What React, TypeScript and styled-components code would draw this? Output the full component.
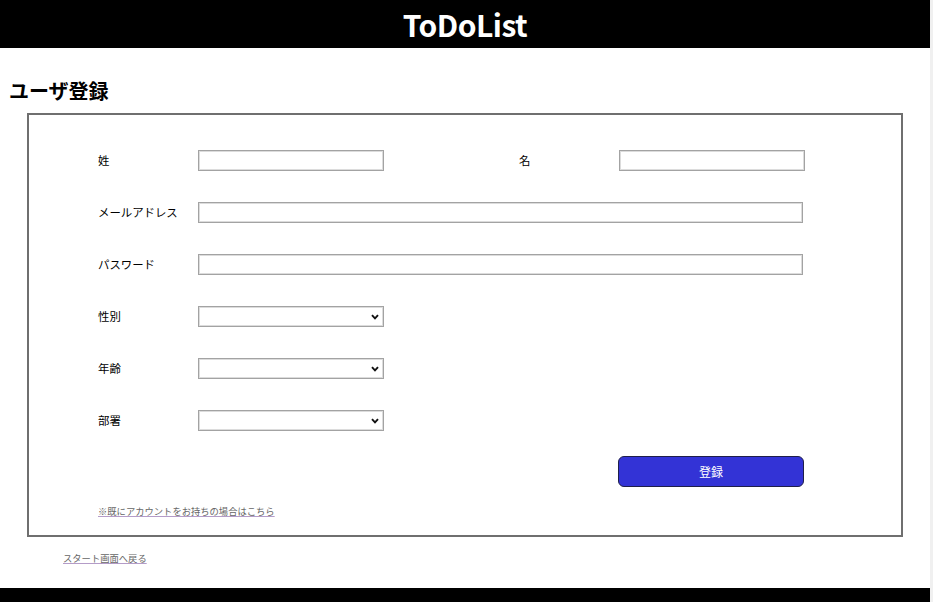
import React from 'react';
import styled, { createGlobalStyle } from 'styled-components';

const GlobalStyle = createGlobalStyle`
    html, body {
        margin: 0;
        padding: 0;
        background: #f0f0f0;
    }
    body {
        font-family: "Noto Sans CJK JP", "Noto Sans", sans-serif;
        color: #000;
    }
`;

const Page = styled.div`
    width: 930px;
    min-height: 100vh;
    background: #fff;
    display: flex;
    flex-direction: column;
`;

const Header = styled.header`
    height: 48px;
    background: #000;
    display: flex;
    align-items: center;
    justify-content: center;
    h1 {
        margin: 0;
        color: #fff;
        font-size: 30px;
        font-weight: 700;
        line-height: 1;
        letter-spacing: -0.5px;
    }
`;

const Main = styled.main`
    padding: 29px 9px 0;
    h2 {
        margin: 0 0 8px;
        font-size: 20px;
        font-weight: 700;
        line-height: 28px;
    }
`;

const FormBox = styled.form`
    margin: 0 18px;
    border: 2px solid #6f6f6f;
    padding: 35px 0 18px 69px;
    display: flex;
    flex-direction: column;
`;

const Row = styled.div`
    display: flex;
    align-items: center;
    height: 21px;
    margin-bottom: 31px;
`;

const Label = styled.label<{ $indent?: number }>`
    width: 100px;
    margin-left: ${p => p.$indent ?? 0}px;
    font-size: 11.4px;
    line-height: 1;
`;

const TextInput = styled.input<{ $w: number }>`
    display: block;
    box-sizing: border-box;
    width: ${p => p.$w}px;
    height: 21px;
    border: 1px solid #a3a3a3;
    box-shadow: inset 0 0 0 1px #dcdcdc;
    background: #fff;
    padding: 0 4px;
    font: inherit;
    font-size: 12px;
    outline: none;
`;

const SelectWrap = styled.div`
    position: relative;
    width: 186px;
    height: 21px;
    svg {
        position: absolute;
        right: 5px;
        top: 8px;
        pointer-events: none;
    }
`;

const Select = styled.select`
    display: block;
    appearance: none;
    box-sizing: border-box;
    width: 100%;
    height: 100%;
    margin: 0;
    border: 1px solid #a3a3a3;
    box-shadow: inset 0 0 0 1px #dcdcdc;
    border-radius: 0;
    background: #fff;
    font: inherit;
    font-size: 12px;
    padding: 0 4px;
    outline: none;
`;

const ButtonRow = styled.div`
    display: flex;
    margin: -6px 0 0 520px;
`;

const SubmitButton = styled.button`
    width: 186px;
    height: 31px;
    background: #3333d6;
    color: #fff;
    border: 1px solid #1f1f4a;
    border-radius: 6px;
    font-family: inherit;
    font-size: 12px;
    cursor: pointer;
`;

const SmallLink = styled.a`
    display: inline-block;
    font-size: 9.3px;
    line-height: 12px;
    color: #666;
    text-decoration: underline;
    text-decoration-color: #b49cc8;
`;

const LoginLink = styled(SmallLink)`
    margin-top: 18px;
    align-self: flex-start;
`;

const BackLink = styled(SmallLink)`
    margin: 15px 0 0 54px;
    align-self: flex-start;
`;

const Footer = styled.footer`
    margin-top: 21px;
    height: 48px;
    background: #000;
`;

const Chevron = () => (
    <svg width="8" height="6" viewBox="0 0 8 6">
        <path d="M1 1.2 L4 4.4 L7 1.2" fill="none" stroke="#111" strokeWidth="1.9" />
    </svg>
);

const SelectBox: React.FC<{ name: string }> = ({ name }) => (
    <SelectWrap>
        <Select name={name} defaultValue="">
            <option value=""></option>
        </Select>
        <Chevron />
    </SelectWrap>
);

const App: React.FC = () => {
    return (
        <>
            <GlobalStyle />
            <Page>
                <Header>
                    <h1>ToDoList</h1>
                </Header>
                <Main>
                    <h2>ユーザ登録</h2>
                    <FormBox onSubmit={e => e.preventDefault()}>
                        <Row>
                            <Label>姓</Label>
                            <TextInput $w={186} />
                            <Label $indent={135}>名</Label>
                            <TextInput $w={186} />
                        </Row>
                        <Row>
                            <Label>メールアドレス</Label>
                            <TextInput $w={605} />
                        </Row>
                        <Row>
                            <Label>パスワード</Label>
                            <TextInput $w={605} type="password" />
                        </Row>
                        <Row>
                            <Label>性別</Label>
                            <SelectBox name="gender" />
                        </Row>
                        <Row>
                            <Label>年齢</Label>
                            <SelectBox name="age" />
                        </Row>
                        <Row>
                            <Label>部署</Label>
                            <SelectBox name="department" />
                        </Row>
                        <ButtonRow>
                            <SubmitButton type="submit">登録</SubmitButton>
                        </ButtonRow>
                        <LoginLink href="#">※既にアカウントをお持ちの場合はこちら</LoginLink>
                    </FormBox>
                    <BackLink href="#">スタート画面へ戻る</BackLink>
                </Main>
                <Footer />
            </Page>
        </>
    );
};

export default App;
